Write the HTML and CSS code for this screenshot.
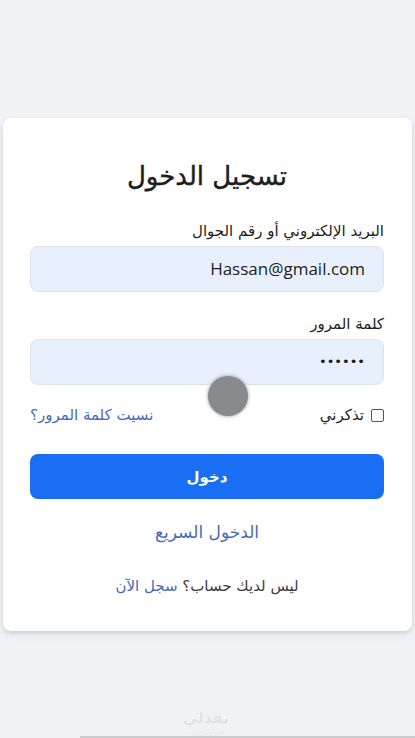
FILE: index.html
```html
<!DOCTYPE html>
<html lang="ar" dir="rtl">
<head>
<meta charset="utf-8">
<title>تسجيل الدخول</title>
<link rel="stylesheet" href="styles.css">
</head>
<body>
<main class="page">
  <section class="card">
    <h1 class="title">تسجيل الدخول</h1>
    <form class="form">
      <label class="field">
        <span class="label">البريد الإلكتروني أو رقم الجوال</span>
        <span class="input input-email">Hassan@gmail.com</span>
      </label>
      <label class="field">
        <span class="label">كلمة المرور</span>
        <span class="input input-pass">••••••</span>
      </label>
      <div class="row">
        <label class="remember"><span class="check"></span><span>تذكرني</span></label>
        <a class="link" href="#">نسيت كلمة المرور؟</a>
      </div>
      <button type="button" class="btn">دخول</button>
      <a class="quick link" href="#">الدخول السريع</a>
      <p class="signup">ليس لديك حساب؟ <a class="link" href="#">سجل الآن</a></p>
    </form>
  </section>
  <div class="watermark"><span class="wm-ar">نفذلي</span><span class="wm-en">nafzly.com</span></div>
  <div class="bottom-bar"></div>
  <div class="touch"></div>
</main>
</body>
</html>
```

FILE: styles.css
```css
* { box-sizing: border-box; }
html, body { margin: 0; padding: 0; }
body {
  background: #f0f2f5;
  font-family: "DejaVu Sans", "Noto Sans", sans-serif;
  color: #1c1e21;
  width: 415px;
  height: 738px;
  overflow: hidden;
}
.page {
  position: relative;
  height: 738px;
  padding-top: 118px;
  display: flex;
  flex-direction: column;
  align-items: center;
}
.card {
  width: 409px;
  background: #fff;
  border-radius: 8px;
  box-shadow: 0 2px 4px rgba(0,0,0,0.1), 0 4px 10px rgba(0,0,0,0.06);
  padding: 40px 28px 0 27px;
  height: 513px;
}
.title {
  margin: 0;
  text-align: center;
  font-size: 26px;
  font-weight: normal;
  line-height: 36px;
  color: #1c1e21;
  -webkit-text-stroke: 0.4px #1c1e21;
}
.form {
  display: flex;
  flex-direction: column;
  margin-top: 27px;
}
.field {
  display: flex;
  flex-direction: column;
  margin-bottom: 22px;
}
.label {
  font-size: 15px;
  line-height: 20px;
  margin-bottom: 5px;
  color: #1c1e21;
}
.input {
  display: block;
  height: 46px;
  border: 1px solid #dde3ee;
  background: #e8f0fe;
  border-radius: 8px;
  padding: 0 18px;
  line-height: 44px;
  color: #1c1e21;
}
.input-email {
  direction: ltr;
  text-align: right;
  font-family: "Open Sans", "Noto Sans", sans-serif;
  font-size: 17px;
}
.input-pass {
  direction: ltr;
  text-align: right;
  font-family: "DejaVu Sans", sans-serif;
  font-size: 13px;
}
.row {
  display: flex;
  justify-content: space-between;
  align-items: center;
  margin-top: -4px;
  height: 24px;
}
.remember {
  display: flex;
  align-items: center;
  gap: 7px;
  font-size: 15px;
  color: #1c1e21;
}
.check {
  width: 13px;
  height: 13px;
  border: 1.5px solid #555;
  border-radius: 2px;
  display: inline-block;
}
.link {
  color: #4a69b6;
  text-decoration: none;
  font-size: 15px;
}
.btn {
  margin-top: 27px;
  height: 45px;
  border: none;
  border-radius: 8px;
  background: #1a6ef4;
  color: #fff;
  font-family: "DejaVu Sans", sans-serif;
  font-size: 15px;
  font-weight: bold;
}
.quick {
  margin-top: 22px;
  text-align: center;
  font-size: 17px;
  line-height: 22px;
}
.signup {
  margin: 34px 0 0;
  text-align: center;
  font-size: 15px;
  color: #3a3b3c;
}
.signup .link { font-size: 15px; }
.watermark {
  position: absolute;
  left: 183px;
  top: 709px;
  display: flex;
  flex-direction: column;
  align-items: center;
  color: rgba(0,0,0,0.07);
}
.wm-ar { font-size: 15px; font-weight: bold; line-height: 18px; }
.wm-en { font-size: 7px; line-height: 8px; direction: ltr; margin-top: 3px; }
.bottom-bar {
  position: absolute;
  left: 80px;
  right: 0;
  bottom: 0;
  height: 2px;
  background: #c9cbce;
}
.touch {
  position: absolute;
  left: 208px;
  top: 376px;
  width: 40px;
  height: 40px;
  border-radius: 50%;
  background: #888a8d;
  box-shadow: 0 0 3px 1px rgba(120,120,120,0.5);
}
```
